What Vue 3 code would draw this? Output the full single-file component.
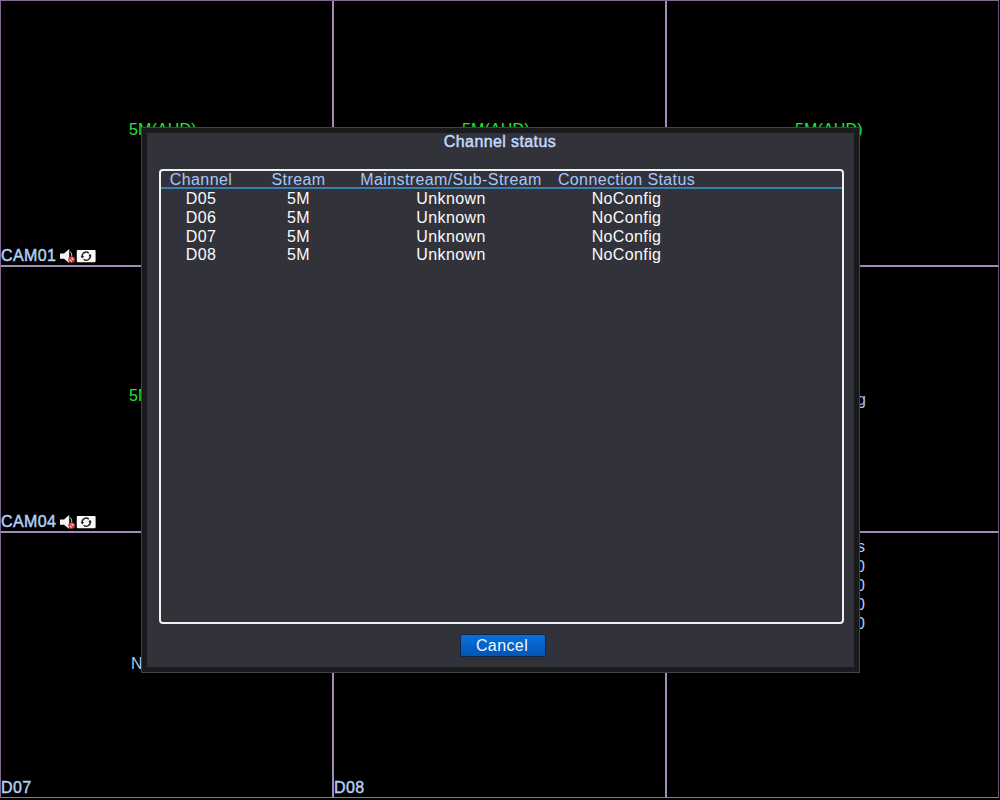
<template>
  <div class="screen">
    <div class="wall">
      <div
        v-for="cell in cells"
        :key="cell.id"
        class="cell"
      >
        <div v-if="cell.rates" class="rates">
          <div class="rate rate-head">Kb/s</div>
          <div v-for="n in 4" :key="n" class="rate">0</div>
        </div>
        <template v-else>
          <div :class="['signal', { offline: !cell.analog }]">{{ cell.analog ? '5M(AHD)' : 'NoConfig' }}</div>
          <div class="label">
            <span>{{ cell.name }}</span>
            <svg v-if="cell.analog" class="icons" width="38" height="16" viewBox="0 0 38 16">
              <path d="M1 5.5h4L10.2 1v14L5 10.7H1z" fill="#f4f4f4" />
              <path d="M11.3 3.5q2 2.5 1.4 5" fill="none" stroke="#c4c4c4" stroke-width="1" />
              <circle cx="12.6" cy="11.6" r="2.7" fill="#f3d9d9" stroke="#c8303a" stroke-width="1.2" />
              <path d="M10.7 9.8l3.8 3.7" stroke="#c8303a" stroke-width="1.3" />
              <rect x="17.8" y="2" width="18.8" height="12.2" rx="1" fill="#fafafa" />
              <path d="M23.4 9.6a4 4 0 0 1 6.4-4.4M31 6.8a4 4 0 0 1-6.4 4.4" fill="none" stroke="#222" stroke-width="1.5" />
              <path d="M21.6 8h3.4l-1.4 2.4zM29.4 8.2h3.4l-2-2.4z" fill="#222" />
            </svg>
          </div>
        </template>
      </div>
    </div>

    <!-- 通道状态对话框 -->
    <div class="dialog">
      <div class="title">Channel status</div>
      <div class="list">
        <div class="row head">
          <span v-for="col in columns" :key="col">{{ col }}</span>
        </div>
        <div v-for="row in rows" :key="row.channel" class="row">
          <span>{{ row.channel }}</span>
          <span>{{ row.stream }}</span>
          <span>{{ row.type }}</span>
          <span>{{ row.status }}</span>
        </div>
      </div>
      <button class="cancel">Cancel</button>
    </div>
  </div>
</template>

<script setup>
import { ref } from 'vue';

const columns = ['Channel', 'Stream', 'Mainstream/Sub-Stream', 'Connection Status'];

// 数字通道列表
const rows = ref(['D05', 'D06', 'D07', 'D08'].map((channel) => ({
  channel,
  stream: '5M',
  type: 'Unknown',
  status: 'NoConfig'
})));

// 九宫格预览窗口
const cells = ref([
  { id: 1, name: 'CAM01', analog: true },
  { id: 2, name: 'CAM02', analog: true },
  { id: 3, name: 'CAM03', analog: true },
  { id: 4, name: 'CAM04', analog: true },
  { id: 5, name: 'D05' },
  { id: 6, name: 'D06' },
  { id: 7, name: 'D07' },
  { id: 8, name: 'D08' },
  { id: 9, rates: true }
]);
</script>

<style>
body {
  margin: 0;
  background: #000;
}
</style>

<style scoped>
.screen {
  position: relative;
  width: 1000px;
  height: 800px;
  overflow: hidden;
  background: #000;
  font-family: "Liberation Sans", Arial, sans-serif;
  font-size: 16px;
  color: #b3d0f8;
}

.wall {
  box-sizing: border-box;
  width: 999px;
  height: 798px;
  display: grid;
  grid-template-columns: 333px 333px 332px;
  grid-template-rows: 266px 266px 265px;
  border-left: 1px solid #82698f;
  border-top: 1px solid #82698f;
}

.cell {
  box-sizing: border-box;
  min-width: 0;
  display: flex;
  flex-direction: column;
  border-right: 2px solid #a38ab4;
  border-bottom: 2px solid #a38ab4;
}

.cell:nth-child(3n) {
  border-right: 1px solid #685574;
}

.cell:nth-child(n + 7) {
  border-bottom: 1px solid #8d759b;
}

.signal {
  margin: 119px 0 0 128px;
  line-height: 20px;
  letter-spacing: 0.15px;
  color: #22e63a;
}

.signal.offline {
  margin: 123px 0 0 130px;
  letter-spacing: 0.3px;
  color: #a9c7f2;
}

.cell:nth-child(n + 7) .signal {
  margin-top: 121px;
}

.label {
  display: flex;
  align-items: center;
  height: 18px;
  margin-top: auto;
  letter-spacing: 0.4px;
  -webkit-text-stroke: 0.45px #b3d0f8;
}

.icons {
  margin-left: 3px;
}

.rates {
  width: 198px;
  padding-top: 4px;
  text-align: right;
}

.rate {
  height: 19px;
  line-height: 19px;
}

.rate-head {
  height: 20px;
}

.dialog {
  position: absolute;
  left: 141px;
  top: 127px;
  box-sizing: border-box;
  width: 719px;
  height: 546px;
  border: 1px solid #434346;
  box-shadow: inset 0 0 0 5px #191a1c;
  background: #32323b;
  display: flex;
  flex-direction: column;
  align-items: center;
  letter-spacing: 0.38px;
}

.title {
  margin-top: 4px;
  height: 20px;
  line-height: 20px;
  padding-right: 1px;
  color: #c2dbfc;
  letter-spacing: 0.4px;
  -webkit-text-stroke: 0.45px #c2dbfc;
}

.list {
  box-sizing: border-box;
  width: 685px;
  height: 455px;
  margin: 17px 0 0 2px;
  border: 2px solid #f0f0f0;
  border-radius: 4px;
}

.row {
  display: grid;
  grid-template-columns: 80px 115px 190px 161px;
  height: 18.8px;
  line-height: 19px;
  text-align: center;
  color: #fafafa;
}

.row span {
  white-space: nowrap;
}

.head {
  box-sizing: border-box;
  height: 18px;
  line-height: 18px;
  color: #a8c6f5;
  border-bottom: 2px solid #377fb2;
}

.cancel {
  box-sizing: border-box;
  width: 86px;
  height: 23px;
  margin: 10px 0 0 4px;
  padding: 0 1px 0 0;
  border: 1px solid #142544;
  border-radius: 2px;
  background: linear-gradient(#0870dc, #0355b4);
  color: #f0f8ff;
  font: inherit;
  line-height: 20px;
  letter-spacing: 0.4px;
}
</style>
